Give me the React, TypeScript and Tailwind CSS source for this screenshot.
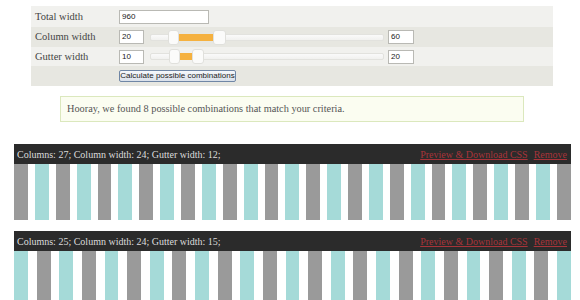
import React from "react"

type Grid = {
  columns: number
  column: number
  gutter: number
  startWith: "gray" | "teal"
}

const grids: Grid[] = [
  { columns: 27, column: 24, gutter: 12, startWith: "gray" },
  { columns: 25, column: 24, gutter: 15, startWith: "teal" },
]

function Slider({ a, b, c, d }: { a: number; b: number; c: number; d: number }) {
  // a/b = left handle, c/d = right handle (px from track start)
  return (
    <div className="relative ml-[6px] h-[7px] w-[234px] rounded-[2px] border border-[#e2e2de] bg-gradient-to-b from-[#fafafa] to-[#f1f1ef]">
      <div className="absolute top-[-1px] h-[7px] bg-[#f5b13f]" style={{ left: b, width: c - b }} />
      <div
        className="absolute top-[-5px] h-[15px] rounded-[3px] border border-[#e0e0dc] bg-[#fbfbfa]"
        style={{ left: a, width: b - a }}
      />
      <div
        className="absolute top-[-5px] h-[15px] rounded-[3px] border border-[#e0e0dc] bg-[#fbfbfa]"
        style={{ left: c, width: d - c }}
      />
    </div>
  )
}

function Field({ value, w }: { value: string; w: string }) {
  return (
    <div
      className={`${w} flex h-[14px] items-center border border-[#b9b9b4] bg-white pl-[2px] font-['Liberation_Sans',sans-serif] text-[8px] text-[#222]`}
    >
      {value}
    </div>
  )
}

function GridPreview({ grid }: { grid: Grid }) {
  const total = grid.columns * grid.column + (grid.columns - 1) * grid.gutter
  const cols = Array.from({ length: grid.columns }, (_, i) => i)
  return (
    <div className="w-[557px]">
      <div className="flex h-[20px] items-center justify-between bg-[#2b2b2b] pl-[3px] pr-[4px] text-[10px] text-[#dcdcdc]">
        <span>
          Columns: {grid.columns}; Column width: {grid.column}; Gutter width: {grid.gutter};
        </span>
        <span className="flex gap-[6px] text-[#a8343a] underline">
          <span>Preview &amp; Download CSS</span>
          <span>Remove</span>
        </span>
      </div>
      <div className="flex h-[56px]">
        {cols.map(i => {
          const gray = (i % 2 === 0) === (grid.startWith === "gray")
          return (
            <React.Fragment key={i}>
              <div
                className={gray ? "h-full bg-[#9a9a9a]" : "h-full bg-[#a5dad8]"}
                style={{ width: `${(grid.column / total) * 100}%` }}
              />
              {i < grid.columns - 1 && (
                <div className="h-full" style={{ width: `${(grid.gutter / total) * 100}%` }} />
              )}
            </React.Fragment>
          )
        })}
      </div>
    </div>
  )
}

export default function App() {
  return (
    <div className="h-[300px] w-[580px] overflow-hidden bg-white font-['Liberation_Serif',serif] text-[10px] text-[#444]">
      <div className="ml-[31px] w-[522px] pt-[6px]">
        <div className="flex h-[21px] items-center bg-[#f1f1ee]">
          <div className="w-[88px] pl-[4px] text-[10.5px]">Total width</div>
          <Field value="960" w="w-[90px]" />
        </div>
        <div className="flex h-[20px] items-center bg-[#e7e7e1]">
          <div className="w-[88px] pl-[4px] text-[10.5px]">Column width</div>
          <Field value="20" w="w-[25px]" />
          <Slider a={17} b={28} c={62} d={75} />
          <div className="ml-[4px]">
            <Field value="60" w="w-[26px]" />
          </div>
        </div>
        <div className="flex h-[19px] items-center bg-[#f1f1ee]">
          <div className="w-[88px] pl-[4px] text-[10.5px]">Gutter width</div>
          <Field value="10" w="w-[25px]" />
          <Slider a={18} b={29} c={41} d={53} />
          <div className="ml-[4px]">
            <Field value="20" w="w-[26px]" />
          </div>
        </div>
        <div className="flex h-[20px] items-center bg-[#e7e7e1]">
          <div className="w-[88px]" />
          <button className="flex h-[12px] w-[117px] items-center justify-center rounded-[2px] border border-[#6f86a5] bg-gradient-to-b from-[#f6f8fb] to-[#d9e0ea] font-['Liberation_Sans',sans-serif] text-[8px] leading-none text-[#222]">
            Calculate possible combinations
          </button>
        </div>
      </div>

      <div className="ml-[60px] mt-[10px] flex h-[26px] w-[464px] items-center border border-[#dbe8bd] bg-[#fbfdf1] pl-[6px] text-[10.3px] text-[#555]">
        Hooray, we found 8 possible combinations that match your criteria.
      </div>

      <div className="ml-[14px] mt-[22px] flex flex-col gap-[11px]">
        {grids.map(g => (
          <GridPreview key={g.columns} grid={g} />
        ))}
      </div>
    </div>
  )
}
